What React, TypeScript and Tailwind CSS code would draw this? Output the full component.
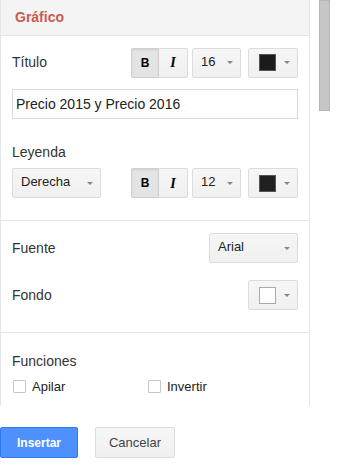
import React from "react";

const font = { fontFamily: '"Liberation Sans", Arial, sans-serif' };

const Arrow = () => (
  <span className="w-0 h-0 border-l-[3px] border-r-[3px] border-t-[3px] border-l-transparent border-r-transparent border-t-[#888]" />
);

const Select = ({ label, width }: { label: string; width: string }) => (
  <div
    className={`${width} h-[30px] flex items-center justify-between pl-[8px] pr-[7px] rounded-[2px] border border-[#dcdcdc] bg-gradient-to-b from-[#f6f6f6] to-[#f0f0f0] text-[13px] text-[#222]`}
  >
    <span className="-mt-[2px]">{label}</span>
    <Arrow />
  </div>
);

const ColorSelect = ({ swatch }: { swatch: string }) => (
  <div className="w-[50px] h-[30px] flex items-center pl-[10px] pr-[7px] justify-between rounded-[2px] border border-[#dcdcdc] bg-gradient-to-b from-[#f6f6f6] to-[#f0f0f0]">
    <span className={`w-[17px] h-[17px] border ${swatch}`} />
    <Arrow />
  </div>
);

const StyleButtons = () => (
  <div className="flex h-[30px]">
    <div className="w-[28px] h-full flex items-center justify-center rounded-l-[2px] border border-[#d0d0d0] bg-[#e4e4e4] shadow-[inset_0_1px_2px_rgba(0,0,0,0.1)] text-[12px] font-black text-black">
      B
    </div>
    <div
      className="w-[29px] h-full flex items-center justify-center rounded-r-[2px] border border-l-0 border-[#dcdcdc] bg-gradient-to-b from-[#f6f6f6] to-[#f0f0f0] text-[14px] font-bold italic text-black"
      style={{ fontFamily: '"Liberation Serif", serif' }}
    >
      I
    </div>
  </div>
);

const Check = ({ label }: { label: string }) => (
  <label className="flex items-center gap-[6px] text-[13px] text-[#222]">
    <span className="w-[13px] h-[13px] border border-[#c6c6c6] rounded-[1px] bg-white" />
    {label}
  </label>
);

export default function App() {
  return (
    <div className="w-[337px] h-[464px] bg-white overflow-hidden" style={font}>
      <div className="flex items-start">
        <div className="w-[310px] h-[406px] border-l border-r border-[#e5e5e5] overflow-hidden">
          <div className="h-[36px] bg-[#f4f4f4] border-b border-[#e5e5e5] flex items-center pl-[14px] text-[14px] font-bold text-[#cc5a4f]">
            Gráfico
          </div>

          {/* título y leyenda */}
          <div className="pl-[11px] pr-[11px] pt-[11px] pb-[22px] border-b border-[#e5e5e5] text-[#333]">
            <div className="flex items-center h-[31px]">
              <span className="text-[14px] flex-1">Título</span>
              <StyleButtons />
              <div className="ml-[4px]">
                <Select label="16" width="w-[49px]" />
              </div>
              <div className="ml-[7px]">
                <ColorSelect swatch="bg-[#1b1b1b] border-[#555]" />
              </div>
            </div>
            <div className="mt-[11px] h-[30px] border border-[#d9d9d9] flex items-center px-[3px] text-[14px] text-[#222]">
              Precio 2015 y Precio 2016
            </div>
            <div className="mt-[25px] text-[14px] leading-[17px]">Leyenda</div>
            <div className="mt-[7px] flex items-center h-[30px]">
              <Select label="Derecha" width="w-[89px]" />
              <div className="ml-[30px]">
                <StyleButtons />
              </div>
              <div className="ml-[4px]">
                <Select label="12" width="w-[49px]" />
              </div>
              <div className="ml-[7px]">
                <ColorSelect swatch="bg-[#202020] border-[#555]" />
              </div>
            </div>
          </div>

          {/* fuente y fondo */}
          <div className="pl-[11px] pr-[11px] pt-[12px] pb-[22px] border-b border-[#e5e5e5] text-[#333]">
            <div className="flex items-center justify-between h-[30px]">
              <span className="text-[14px]">Fuente</span>
              <Select label="Arial" width="w-[89px]" />
            </div>
            <div className="mt-[17px] flex items-center justify-between h-[30px]">
              <span className="text-[14px]">Fondo</span>
              <ColorSelect swatch="bg-white border-[#aaa]" />
            </div>
          </div>

          {/* funciones */}
          <div className="pl-[11px] pt-[20px] text-[#333]">
            <div className="text-[14px] leading-[17px]">Funciones</div>
            <div className="mt-[8px] flex h-[17px] items-center pl-[1px]">
              <div className="w-[135px]">
                <Check label="Apilar" />
              </div>
              <Check label="Invertir" />
            </div>
          </div>
        </div>
        <div className="ml-[9px] w-[11px] h-[111px] bg-[#c6c6c6] border border-[#b4b4b4]" />
      </div>

      <div className="mt-[21px] flex gap-[17px]">
        <button className="w-[78px] h-[31px] rounded-[2px] bg-[#4d90fe] border border-[#3079ed] text-white text-[12px] font-bold">
          Insertar
        </button>
        <button className="w-[80px] h-[31px] rounded-[2px] border border-[#dcdcdc] bg-gradient-to-b from-[#f6f6f6] to-[#f0f0f0] text-[#444] text-[13px]">
          Cancelar
        </button>
      </div>
    </div>
  );
}
